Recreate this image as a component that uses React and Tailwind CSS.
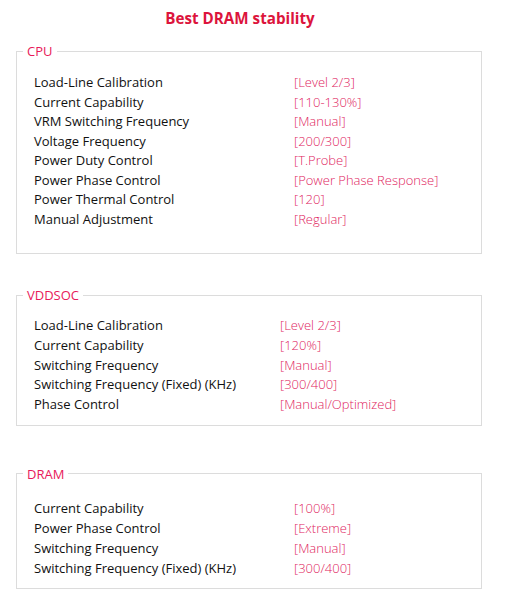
import React from 'react';

const sections = [
  {
    name: 'CPU',
    valueX: 'w-[260px]',
    leading: 'leading-[19.5px]',
    pad: 'pt-[14px] pb-[24px]',
    gap: '',
    rows: [
      ['Load-Line Calibration', '[Level 2/3]'],
      ['Current Capability', '[110-130%]'],
      ['VRM Switching Frequency', '[Manual]'],
      ['Voltage Frequency', '[200/300]'],
      ['Power Duty Control', '[T.Probe]'],
      ['Power Phase Control', '[Power Phase Response]'],
      ['Power Thermal Control', '[120]'],
      ['Manual Adjustment', '[Regular]'],
    ],
  },
  {
    name: 'VDDSOC',
    valueX: 'w-[246px]',
    leading: 'leading-[19.75px]',
    pad: 'pt-[13px] pb-[10px]',
    gap: 'mt-[33px]',
    rows: [
      ['Load-Line Calibration', '[Level 2/3]'],
      ['Current Capability', '[120%]'],
      ['Switching Frequency', '[Manual]'],
      ['Switching Frequency (Fixed) (KHz)', '[300/400]'],
      ['Phase Control', '[Manual/Optimized]'],
    ],
  },
  {
    name: 'DRAM',
    valueX: 'w-[260px]',
    leading: 'leading-[20px]',
    pad: 'pt-[16px] pb-[10px]',
    gap: 'mt-[40px]',
    rows: [
      ['Current Capability', '[100%]'],
      ['Power Phase Control', '[Extreme]'],
      ['Switching Frequency', '[Manual]'],
      ['Switching Frequency (Fixed) (KHz)', '[300/400]'],
    ],
  },
];

export default function App() {
  return (
    <div className="min-h-screen bg-white font-['Open_Sans',sans-serif] text-[#111]">
      <h1 className="w-[480px] pt-[8px] text-center text-[15.2px] font-bold leading-[20px] text-[#dc143c]">
        Best DRAM stability
      </h1>

      <div className="pl-[16px] pt-[15px]">
        {sections.map((s) => (
          <fieldset key={s.name} className={`w-[466px] border border-[#dcdcdc] ${s.gap} ${s.pad} pl-[17px]`}>
            <legend className="-ml-[11px] px-[4px] text-[13px] leading-[16px] text-[#e8195a]">{s.name}</legend>
            {s.rows.map(([label, value]) => (
              <div key={label} className={`flex text-[13px] ${s.leading}`}>
                <span className={`${s.valueX} shrink-0`}>{label}</span>
                <span className="font-light text-[#e0245e]">{value}</span>
              </div>
            ))}
          </fieldset>
        ))}
      </div>
    </div>
  );
}
